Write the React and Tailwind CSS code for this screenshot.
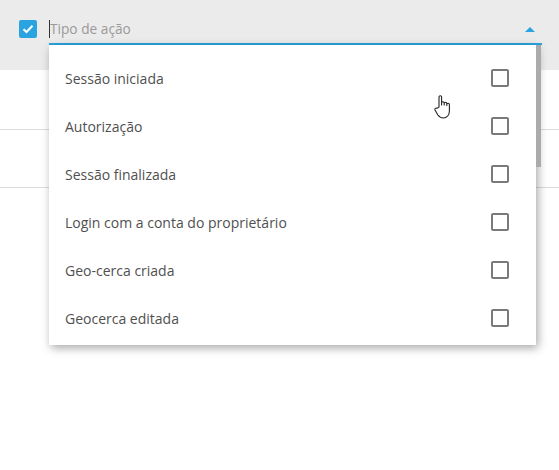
const items = [
  'Sessão iniciada',
  'Autorização',
  'Sessão finalizada',
  'Login com a conta do proprietário',
  'Geo-cerca criada',
  'Geocerca editada',
];

export default function App() {
  return (
    <div className="relative w-[559px] h-[470px] overflow-hidden bg-white font-['Open_Sans',sans-serif]">
      {/* Filter header */}
      <div className="flex h-[70px] bg-[#ebebeb] pl-[19px] pt-[20px]">
        <div className="flex h-[18px] w-[18px] items-center justify-center rounded-[2px] bg-[#2aa4e0]">
          <svg width="12" height="10" viewBox="0 0 12 10" fill="none">
            <path d="M1.5 5.2 L4.5 8 L10.5 1.8" stroke="white" strokeWidth="2" />
          </svg>
        </div>
        <div className="ml-[12px] -mt-[2px] flex h-[27px] w-[493px] items-start border-b-2 border-[#2aa4e0]">
          <div className="flex h-[22px] flex-1 items-center">
            <span className="h-[18px] w-px bg-[#333]" />
            <span className="text-[13.7px] leading-none text-[#9a9a9a]">Tipo de ação</span>
          </div>
          <div className="mr-[7px] mt-[9px] h-0 w-0 border-x-[5px] border-b-[5px] border-x-transparent border-b-[#2aa4e0]" />
        </div>
      </div>

      {/* Table rows behind */}
      <div className="h-[60px] border-b border-[#dcdcdc]" />
      <div className="h-[58px] border-b border-[#dcdcdc]" />

      {/* Dropdown */}
      <div className="absolute left-[49px] top-[45px] h-[300px] w-[487px] bg-white pt-[9px] shadow-[2px_3px_9px_rgba(0,0,0,0.35)]">
        {items.map((item) => (
          <div key={item} className="flex h-[48px] items-center justify-between pl-[16px] pr-[27px]">
            <span className="text-[14px] text-[#505050]">{item}</span>
            <span className="h-[18px] w-[18px] rounded-[2px] border-2 border-[#7a7a7a]" />
          </div>
        ))}
      </div>
      <div className="absolute left-[536px] top-[45px] h-[122px] w-[5px] bg-[#ababab]" />

      {/* Mouse cursor */}
      <svg className="absolute left-[433px] top-[94px]" width="22" height="26" viewBox="0 0 22 26" fill="white" stroke="#222" strokeWidth="1.1" strokeLinejoin="round">
        <path d="M6 13 V3 a1.3 1.3 0 0 1 2.6 0 V11 V9 a1.3 1.3 0 0 1 2.6 0 V11 V9.5 a1.3 1.3 0 0 1 2.6 0 V11.5 V10.5 a1.3 1.3 0 0 1 2.6 0 V17 c0 4 -2.5 7 -6 7 c-2.5 0 -4 -1 -5.5 -3 L2 16 a1.3 1.3 0 0 1 2 -1.6 Z" />
      </svg>
    </div>
  );
}
